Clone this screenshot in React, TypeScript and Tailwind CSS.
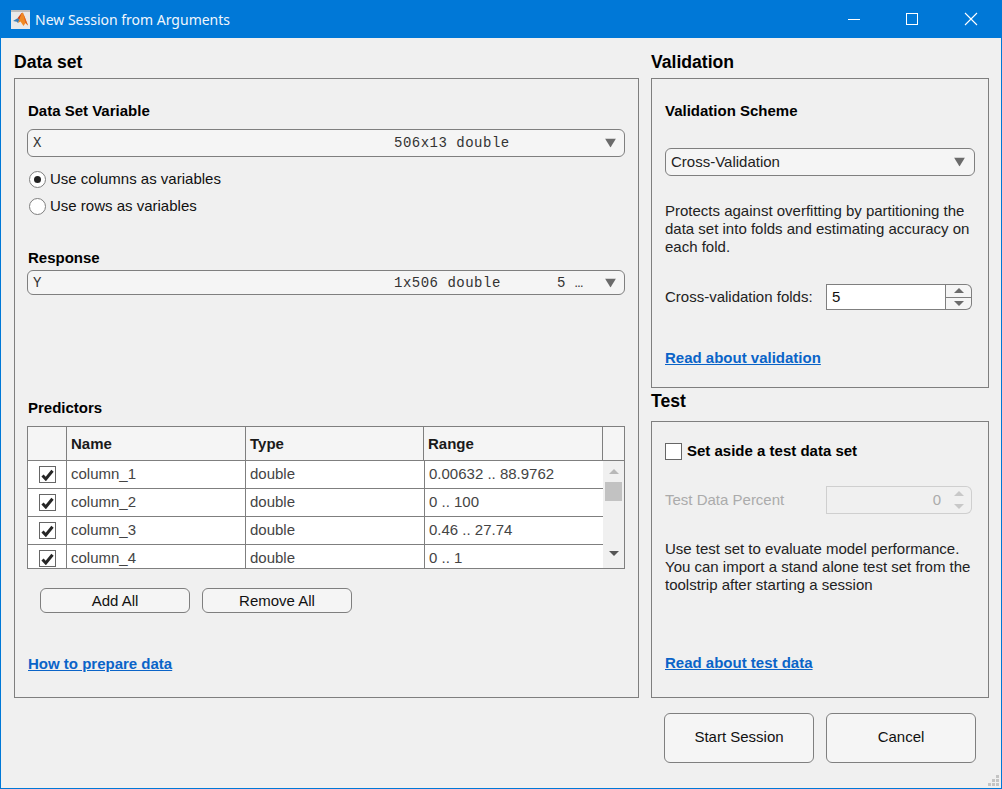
import React from "react";

const sans = "font-['Liberation_Sans',Arial,sans-serif]";
const line = "border-[#7f7f7f]";

function Tri({ up = false, color = "#6b6b6b", w = 11, h = 9 }: { up?: boolean; color?: string; w?: number; h?: number }) {
  return (
    <svg width={w} height={h} viewBox="0 0 10 8" preserveAspectRatio="none" className="block">
      <polygon points={up ? "5,0 10,8 0,8" : "0,0 10,0 5,8"} fill={color} />
    </svg>
  );
}

function Label({ children, className = "" }: { children: React.ReactNode; className?: string }) {
  return <div className={`h-[18px] text-[15px] leading-[18px] font-bold text-black ${className}`}>{children}</div>;
}

function Heading({ children, className = "" }: { children: React.ReactNode; className?: string }) {
  return <div className={`h-[26px] text-[17.6px] leading-[26px] font-bold text-black ${className}`}>{children}</div>;
}

function A({ children, className = "" }: { children: React.ReactNode; className?: string }) {
  return <a className={`block h-[18px] text-[15px] leading-[18px] font-bold text-[#0a64c8] underline ${className}`}>{children}</a>;
}

function Mono({ a, b, c, h, className = "" }: { a: string; b: string; c?: string; h: string; className?: string }) {
  return (
    <div className={`relative flex items-center -ml-px w-[598px] ${h} rounded-[6px] border ${line} bg-[#f5f5f5] pt-[1px] font-['Liberation_Mono',monospace] text-[14px] tracking-[0.5px] text-[#333] ${className}`}>
      <span className="ml-[5px] w-[361px]">{a}</span>
      <span className="w-[163px]">{b}</span>
      {c && <span className="whitespace-pre">{c}</span>}
      <span className="absolute right-[8px] top-1/2 -translate-y-1/2">
        <Tri />
      </span>
    </div>
  );
}

function Radio({ on, text, className = "" }: { on?: boolean; text: string; className?: string }) {
  return (
    <div className={`flex items-center h-[18px] ml-[1px] text-[15px] leading-[18px] text-[#111] ${className}`}>
      <span className={`flex items-center justify-center w-[17px] h-[17px] rounded-full border ${line} bg-white`}>
        {on && <span className="w-[7px] h-[7px] rounded-full bg-[#222]" />}
      </span>
      <span className="ml-[4px]">{text}</span>
    </div>
  );
}

function Check({ on = true }: { on?: boolean }) {
  return (
    <span className="flex items-center justify-center w-[17px] h-[17px] border border-[#666] bg-white shrink-0">
      {on && (
        <svg width="13" height="12" viewBox="0 0 13 12">
          <path d="M1.5 6.5 L4.8 10 L11.5 1.8" fill="none" stroke="#262626" strokeWidth="3" />
        </svg>
      )}
    </span>
  );
}

const rows = [
  ["column_1", "double", "0.00632 .. 88.9762"],
  ["column_2", "double", "0 .. 100"],
  ["column_3", "double", "0.46 .. 27.74"],
  ["column_4", "double", "0 .. 1"],
];

function Table() {
  return (
    <div className={`-ml-px w-[598px] h-[143px] border ${line} bg-white overflow-hidden text-[15px] text-[#444]`}>
      <div className={`flex h-[34px] border-b ${line} bg-[#f5f5f5] font-bold text-[#1a1a1a] leading-[33px]`}>
        <div className={`w-[39px] border-r ${line}`} />
        <div className={`w-[179px] border-r ${line} pl-[4px]`}>Name</div>
        <div className={`w-[178px] border-r ${line} pl-[4px]`}>Type</div>
        <div className={`w-[179px] border-r ${line} pl-[4px]`}>Range</div>
      </div>
      <div className="flex">
        <div className="w-[575px]">
          {rows.map((r) => (
            <div key={r[0]} className={`flex h-[28px] border-b ${line} leading-[26px]`}>
              <div className={`flex items-center justify-center w-[39px] border-r ${line}`}>
                <Check />
              </div>
              <div className={`w-[179px] border-r ${line} pl-[4px]`}>{r[0]}</div>
              <div className="w-[178px] pl-[4px]">{r[1]}</div>
              <div className={`w-[179px] border-l ${line} pl-[4px]`}>{r[2]}</div>
            </div>
          ))}
        </div>
        <div className="flex flex-col items-center w-[21px] h-[108px] bg-[#f0f0f0]">
          <div className="mt-[8px]"><Tri up color="#b8b8b8" w={10} h={5} /></div>
          <div className="mt-[8px] w-[17px] h-[19px] bg-[#c2c2c2]" />
          <div className="mt-[50px]"><Tri color="#555" w={10} h={5} /></div>
        </div>
      </div>
    </div>
  );
}

function Btn({ children, className = "" }: { children: React.ReactNode; className?: string }) {
  return (
    <div className={`flex items-center justify-center w-[150px] rounded-[6px] border ${line} bg-[#f5f5f5] text-[15px] text-[#111] ${className}`}>
      {children}
    </div>
  );
}

function Para({ children, className = "" }: { children: React.ReactNode; className?: string }) {
  return <div className={`w-[312px] text-[15px] leading-[18px] text-[#222] ${className}`}>{children}</div>;
}

function Logo() {
  return (
    <svg width="19" height="19" viewBox="0 0 19 19" className="block">
      <rect x="0" y="0" width="19" height="19" fill="#e9e9e9" />
      <rect x="0" y="0" width="19" height="2" fill="#bdbdbd" />
      <path d="M2 11 L6.5 8.3 L8.6 9.8 L7 13 L5.8 11.8 Z" fill="#3f7fb5" />
      <path d="M6.5 8.3 L10.5 3 L12 2.8 L8.6 9.8 Z" fill="#c9421c" />
      <path d="M10.5 3.2 L12 2.8 L14.5 9 L17 15.5 L14.5 13 L12.5 16 L9.5 11.5 L7 13 Z" fill="#f08a24" />
      <path d="M12 2.8 L14.5 9 L17 15.5 L14.5 13 Z" fill="#e0601e" />
    </svg>
  );
}

function Spinner({ disabled = false }: { disabled?: boolean }) {
  const b = disabled ? "border-[#cfcfcf]" : line;
  const c = disabled ? "#c8c8c8" : "#6b6b6b";
  return (
    <div className={`flex flex-col w-[26px] h-full border-y border-r ${b} rounded-r-[6px] ${disabled ? "" : "bg-[#f5f5f5]"}`}>
      <div className={`flex-1 flex items-center justify-center border-b ${disabled ? "border-transparent" : line}`}><Tri up color={c} w={10} h={5} /></div>
      <div className="flex-1 flex items-center justify-center"><Tri color={c} w={10} h={5} /></div>
    </div>
  );
}

export default function App() {
  return (
    <div className={`relative w-[1002px] h-[789px] border-x border-b border-[#0078d7] bg-[#f0f0f0] overflow-hidden ${sans}`}>
      <div className="flex items-center h-[38px] -mx-px bg-[#0078d7] text-white">
        <div className="ml-[11px]"><Logo /></div>
        <div className="ml-[5px] font-['Noto_Sans',sans-serif] text-[14px] text-[#f0f6fc]">New Session from Arguments</div>
        <div className="flex items-center ml-auto mr-[8px]">
          <svg width="46" height="38" viewBox="0 0 46 38" className="block"><path d="M17 19.5 H29" stroke="#fff" /></svg>
          <svg width="46" height="38" viewBox="0 0 46 38" className="block ml-[12px]"><rect x="17.5" y="13.5" width="11" height="11" fill="none" stroke="#fff" /></svg>
          <svg width="46" height="38" viewBox="0 0 46 38" className="block ml-[13px]"><path d="M17 13 L29 25 M29 13 L17 25" stroke="#fff" strokeWidth="1.1" /></svg>
        </div>
      </div>

      <div className="flex ml-[13px] gap-[12px]">
        <div className="w-[625px]">
          <Heading className="mt-[11px] mb-[3px]">Data set</Heading>
          <div className={`flex flex-col h-[620px] border ${line} pl-[13px] pt-[23px]`}>
            <Label>Data Set Variable</Label>
            <Mono a="X" b="506x13 double" h="h-[28px]" className="mt-[9px]" />
            <Radio on text="Use columns as variables" className="mt-[13px]" />
            <Radio text="Use rows as variables" className="mt-[9px]" />
            <Label className="mt-[34px]">Response</Label>
            <Mono a="Y" b="1x506 double" c="5 …" h="h-[25px]" className="mt-[3px]" />
            <Label className="mt-[104px]">Predictors</Label>
            <div className="mt-[9px]"><Table /></div>
            <div className="flex gap-[12px] mt-[19px] ml-[12px]">
              <Btn className="h-[25px] pt-[1px]">Add All</Btn>
              <Btn className="h-[25px] pt-[1px]">Remove All</Btn>
            </div>
            <A className="mt-[42px]">How to prepare data</A>
          </div>
        </div>

        <div className="w-[338px]">
          <Heading className="mt-[11px] mb-[3px]">Validation</Heading>
          <div className={`flex flex-col h-[310px] border ${line} pl-[13px] pt-[23px]`}>
            <Label>Validation Scheme</Label>
            <div className={`relative flex items-center mt-[28px] w-[310px] h-[28px] rounded-[6px] border ${line} bg-[#f5f5f5] pl-[5px] pt-[1px] text-[15px] text-[#222]`}>
              Cross-Validation
              <span className="absolute right-[9px] top-1/2 -translate-y-1/2"><Tri /></span>
            </div>
            <Para className="mt-[26px]">
              Protects against overfitting by partitioning the data set into folds and estimating accuracy on each fold.
            </Para>
            <div className="flex items-center mt-[28px] h-[26px]">
              <div className="w-[161px] text-[15px] text-[#222]">Cross-validation folds:</div>
              <div className={`flex items-center w-[120px] h-full border ${line} bg-white pl-[5px] text-[15px] text-[#111]`}>5</div>
              <Spinner />
            </div>
            <A className="mt-[39px]">Read about validation</A>
          </div>

          <Heading className="mb-[7px]">Test</Heading>
          <div className={`flex flex-col h-[277px] border ${line} pl-[13px] pt-[20px]`}>
            <div className="flex items-center h-[18px]">
              <Check on={false} />
              <Label className="ml-[5px]">Set aside a test data set</Label>
            </div>
            <div className="flex items-center mt-[26px] h-[28px]">
              <div className="w-[161px] text-[15px] text-[#ababab]">Test Data Percent</div>
              <div className="flex items-center justify-end w-[120px] h-full border-y border-l border-[#cfcfcf] pr-[5px] text-[15px] text-[#ababab]">0</div>
              <Spinner disabled />
            </div>
            <Para className="mt-[26px]">
              Use test set to evaluate model performance. You can import a stand alone test set from the toolstrip after starting a session
            </Para>
            <A className="mt-[60px]">Read about test data</A>
          </div>

          <div className="flex gap-[12px] mt-[15px] ml-[13px]">
            <Btn className="h-[50px] pb-[2px]">Start Session</Btn>
            <Btn className="h-[50px] pb-[2px]">Cancel</Btn>
          </div>
        </div>
      </div>

      <svg width="12" height="12" viewBox="0 0 12 12" className="absolute right-[1px] bottom-[1px]">
        <g fill="#c4c4c4">
          <rect x="8" y="0" width="3" height="3" />
          <rect x="4" y="4" width="3" height="3" />
          <rect x="8" y="4" width="3" height="3" />
          <rect x="0" y="8" width="3" height="3" />
          <rect x="4" y="8" width="3" height="3" />
          <rect x="8" y="8" width="3" height="3" />
        </g>
      </svg>
    </div>
  );
}
